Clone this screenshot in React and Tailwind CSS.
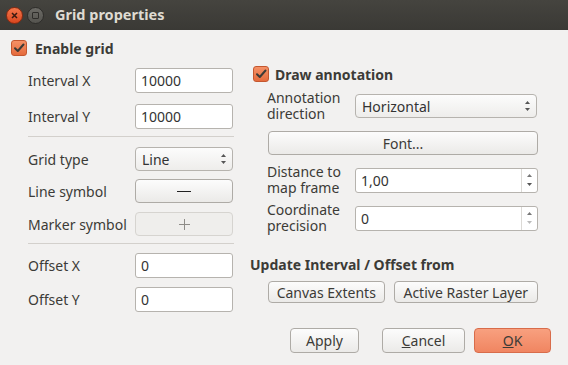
import React from "react";

const font = { fontFamily: '"Noto Sans", "Open Sans", sans-serif' };

const Check = () => (
  <span className="w-[16px] h-[16px] rounded-[3px] border border-[#c4572f] bg-gradient-to-b from-[#f59166] to-[#e56b3c] flex items-center justify-center shrink-0">
    <svg width="12" height="12" viewBox="0 0 12 12">
      <path d="M2 6.2 L4.8 9 L10.5 2.5" fill="none" stroke="#3c3b37" strokeWidth="2" strokeLinecap="round" strokeLinejoin="round" />
    </svg>
  </span>
);

const Input = ({ value, w = "w-[98px]", h = "h-[25px]" }) => (
  <div className={`${w} ${h} bg-white border border-[#b6b3ae] rounded-[3px] flex items-center px-[5px] text-[14px] text-[#333]`}>
    {value}
  </div>
);

const Spin = ({ value, enabledDown }) => (
  <div className="w-[183px] h-[25px] bg-white border border-[#b6b3ae] rounded-[3px] flex text-[14px] text-[#333]">
    <div className="flex-1 flex items-center px-[5px]">{value}</div>
    <div className="w-[16px] border-l border-[#dcdad6] flex flex-col items-center justify-center gap-[6px]">
      <svg width="5" height="3" viewBox="0 0 5 3"><path d="M0 3 L2.5 0 L5 3Z" fill="#777" /></svg>
      <svg width="5" height="3" viewBox="0 0 5 3"><path d="M0 0 L2.5 3 L5 0Z" fill={enabledDown ? "#555" : "#bbb"} /></svg>
    </div>
  </div>
);

const Arrows = () => (
  <div className="flex flex-col items-center gap-[4px]">
    <svg width="5" height="3" viewBox="0 0 5 3"><path d="M0 3 L2.5 0 L5 3Z" fill="#555" /></svg>
    <svg width="5" height="3" viewBox="0 0 5 3"><path d="M0 0 L2.5 3 L5 0Z" fill="#555" /></svg>
  </div>
);

const Select = ({ value, w }) => (
  <div className={`${w} h-[24px] bg-gradient-to-b from-[#fcfcfc] to-[#eeedeb] border border-[#b6b3ae] rounded-[4px] flex items-center justify-between pl-[6px] pr-[6px] text-[14px] text-[#333]`}>
    <span>{value}</span>
    <Arrows />
  </div>
);

const Btn = ({ children, w, h = "h-[24px]", disabled, extra = "" }) => (
  <div className={`${w} ${h} ${disabled ? "bg-[#efeeec] border-[#d6d4d0] text-[#999]" : "bg-gradient-to-b from-[#fcfcfc] to-[#ebeae8] border-[#aeaba6] text-[#3c3b37]"} border rounded-[4px] flex items-center justify-center text-[14px] ${extra}`}>
    {children}
  </div>
);

const Label = ({ children }) => <span className="w-[107px] text-[14px] text-[#3c3b37]">{children}</span>;

export default function App() {
  return (
    <div style={font} className="w-[568px] h-[365px] bg-[#f2f1f0] flex flex-col overflow-hidden">
      <div className="h-[30px] bg-gradient-to-b from-[#45443f] to-[#3a3935] flex items-center pl-[6px]">
        <div className="w-[17px] h-[17px] rounded-full bg-gradient-to-b from-[#f5764a] to-[#d9461e] border border-[#8a2a10] flex items-center justify-center">
          <svg width="7" height="7" viewBox="0 0 7 7"><path d="M1 1 L6 6 M6 1 L1 6" stroke="#3a1a10" strokeWidth="1.5" /></svg>
        </div>
        <div className="w-[17px] h-[17px] ml-[4px] rounded-full bg-gradient-to-b from-[#6b6a65] to-[#55544f] border border-[#2e2d2a] flex items-center justify-center">
          <div className="w-[7px] h-[7px] border border-[#2e2d2a] rounded-[1px]" />
        </div>
        <span className="ml-[11px] text-[14.5px] font-bold text-[#dfdbd2]">Grid properties</span>
      </div>

      <div className="flex items-center gap-[8px] pl-[11px] mt-[10px] h-[16px]">
        <Check />
        <span className="text-[14px] font-bold text-[#3c3b37]">Enable grid</span>
      </div>

      <div className="flex mt-[12px]">
        <div className="ml-[28px] w-[206px] flex flex-col">
          <div className="flex items-center"><Label>Interval X</Label><Input value="10000" /></div>
          <div className="flex items-center mt-[11px]"><Label>Interval Y</Label><Input value="10000" /></div>
          <div className="h-px bg-[#d3d0cc] mt-[7px]" />
          <div className="flex items-center mt-[10px]"><Label>Grid type</Label><Select value="Line" w="w-[98px]" /></div>
          <div className="flex items-center mt-[8px]"><Label>Line symbol</Label>
            <Btn w="w-[98px]"><span className="w-[14px] h-px bg-[#222]" /></Btn>
          </div>
          <div className="flex items-center mt-[9px]"><Label>Marker symbol</Label>
            <Btn w="w-[98px]" disabled>
              <svg width="11" height="11" viewBox="0 0 11 11"><path d="M5.5 0 V11 M0 5.5 H11" stroke="#8e8c88" strokeWidth="1" /></svg>
            </Btn>
          </div>
          <div className="h-px bg-[#d3d0cc] mt-[7px]" />
          <div className="flex items-center mt-[9px]"><Label>Offset X</Label><Input value="0" /></div>
          <div className="flex items-center mt-[9px]"><Label>Offset Y</Label><Input value="0" /></div>
        </div>

        <div className="ml-[16px] w-[288px] flex flex-col -mt-[2px]">
          <div className="flex items-center gap-[6px] pl-[3px] h-[16px]">
            <Check />
            <span className="text-[14px] font-bold text-[#3c3b37]">Draw annotation</span>
          </div>
          <div className="flex items-center mt-[8px] pl-[17px]">
            <span className="w-[88px] text-[14px] leading-[16px] text-[#3c3b37]">Annotation direction</span>
            <Select value="Horizontal" w="w-[182px]" />
          </div>
          <div className="pl-[18px] mt-[9px]"><Btn w="w-[270px]">Font...</Btn></div>
          <div className="flex items-center mt-[9px] pl-[17px]">
            <span className="w-[88px] text-[14px] leading-[16px] text-[#3c3b37]">Distance to map frame</span>
            <Spin value="1,00" enabledDown />
          </div>
          <div className="flex items-center mt-[6px] pl-[17px]">
            <span className="w-[88px] text-[14px] leading-[16px] text-[#3c3b37]">Coordinate precision</span>
            <Spin value="0" />
          </div>
          <span className="mt-[20px] text-[14px] font-bold text-[#3c3b37]">Update Interval / Offset from</span>
          <div className="flex gap-[9px] pl-[18px] mt-[6px]">
            <Btn w="w-[117px]" h="h-[22px]">Canvas Extents</Btn>
            <Btn w="w-[145px]" h="h-[22px]">Active Raster Layer</Btn>
          </div>
        </div>
      </div>

      <div className="flex justify-end gap-[9px] pr-[17px] mt-auto mb-[12px]">
        <Btn w="w-[69px]" h="h-[25px]" extra="mr-[14px]">Apply</Btn>
        <Btn w="w-[83px]" h="h-[25px]"><span><span className="underline">C</span>ancel</span></Btn>
        <div className="w-[77px] h-[25px] rounded-[4px] border border-[#d86c4a] bg-gradient-to-b from-[#f8a07f] to-[#f08561] flex items-center justify-center text-[14px] text-[#3c3b37]">
          <span><span className="underline">O</span>K</span>
        </div>
      </div>
    </div>
  );
}
